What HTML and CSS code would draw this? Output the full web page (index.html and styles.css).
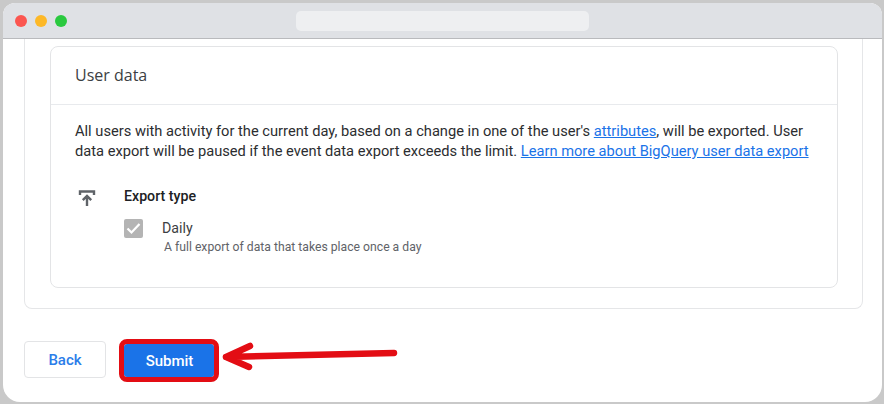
FILE: index.html
```html
<!DOCTYPE html>
<html lang="en">
<head>
<meta charset="utf-8">
<title>User data export</title>
<link rel="stylesheet" href="styles.css">
</head>
<body>
<div class="window">
  <header class="titlebar">
    <div class="lights">
      <span class="light red"></span>
      <span class="light yellow"></span>
      <span class="light green"></span>
    </div>
    <div class="urlbar"></div>
  </header>
  <main class="content">
    <section class="outer-card">
      <div class="inner-card">
        <h2 class="card-title">User data</h2>
        <div class="card-body">
          <p class="desc">All users with activity for the current day, based on a change in one of the user's <a href="#">attributes</a>, will be exported. User data export will be paused if the event data export exceeds the limit. <a href="#">Learn more about BigQuery user data export</a></p>
          <div class="export">
            <svg class="export-icon" width="24" height="24" viewBox="0 0 24 24" aria-hidden="true"><path d="M5 9V5.500h14V9M12 20V10M7.800 14.200 12 10l4.200 4.200" fill="none" stroke="#5f6368" stroke-width="2.400"/></svg>
            <div class="export-main">
              <h3 class="export-title">Export type</h3>
              <div class="option">
                <span class="check"><svg width="19" height="19" viewBox="0 0 19 19" aria-hidden="true"><path d="M3.500 9.500 7.500 13.500 15.500 5" fill="none" stroke="#fff" stroke-width="2.200"/></svg></span>
                <div class="option-text">
                  <div class="option-name">Daily</div>
                  <div class="option-desc">A full export of data that takes place once a day</div>
                </div>
              </div>
            </div>
          </div>
        </div>
      </div>
    </section>
    <footer class="actions">
      <button class="btn back">Back</button>
      <button class="btn submit">Submit</button>
      <svg class="arrow" width="182" height="40" viewBox="0 0 182 40" aria-hidden="true"><path d="M174 13 6 17M30 6 6 17 29 27" fill="none" stroke="#e30d14" stroke-width="6.500" stroke-linecap="round" stroke-linejoin="round"/></svg>
    </footer>
  </main>
</div>
</body>
</html>
```
FILE: styles.css
```css
* { box-sizing: border-box; }
html, body { margin: 0; height: 100%; }
body {
  width: 884px;
  height: 404px;
  overflow: hidden;
  padding: 3px 2px 2px 3px;
  background: #c9c9c9;
  font-family: Roboto, "Liberation Sans", sans-serif;
  color: #3c4043;
}
.window {
  height: 399px;
  background: #fff;
  border-radius: 12px 12px 17px 17px;
  overflow: hidden;
  display: flex;
  flex-direction: column;
}
.titlebar {
  height: 36px;
  flex: none;
  background: #dfe1e5;
  border-bottom: 1px solid #b9babd;
  display: flex;
  align-items: center;
  padding-left: 12px;
}
.lights { display: flex; gap: 8px; }
.light { width: 12px; height: 12px; border-radius: 50%; }
.red { background: #fb5650; }
.yellow { background: #fdb827; }
.green { background: #2ac93f; }
.urlbar {
  width: 293px;
  height: 20px;
  margin-left: 229px;
  background: #eeeff1;
  border-radius: 5px;
}
.content { flex: 1; padding: 0 19px 0 21px; display: flex; flex-direction: column; }
.outer-card {
  height: 270px;
  padding: 7px 24px 0 25px;
  border: 1px solid #e5e6e8;
  border-top: 0;
  border-radius: 0 0 8px 8px;
}
.inner-card {
  height: 242px;
  border: 1px solid #e3e4e6;
  border-radius: 8px;
}
.card-title {
  margin: 0;
  height: 58px;
  padding: 19px 24px 0;
  font-family: "Open Sans", Roboto, sans-serif;
  font-size: 16px;
  line-height: 18px;
  font-weight: 400;
  color: #3c4043;
  border-bottom: 1px solid #e8eaed;
}
.card-body { padding: 16px 24px 0; }
.desc { margin: 0; font-size: 14.67px; line-height: 20px; color: #2b2d30; }
.desc a { color: #1a73e8; text-decoration: underline; }
.export { display: flex; margin-top: 25px; }
.export-icon { flex: none; }
.export-main { margin-left: 25px; }
.export-title { margin: 0; font-size: 14.2px; line-height: 20px; font-weight: 500; color: #202124; }
.option { display: flex; margin-top: 13px; }
.check {
  width: 19px; height: 19px;
  background: #b4b4b4;
  border-radius: 2px;
  display: flex;
}
.option-text { margin: 1px 0 0 19px; }
.option-name { font-size: 14.2px; line-height: 17px; color: #3c4043; }
.option-desc { margin: 2px 0 0 2px; font-size: 12.2px; line-height: 17px; color: #5f6368; }
.actions {
  position: relative;
  display: flex;
  align-items: flex-start;
  gap: 18px;
  margin-top: 32px;
}
.btn {
  font-family: Roboto, sans-serif;
  font-size: 15px;
  font-weight: 500;
  border-radius: 4px;
  padding: 0;
}
.back { width: 82px; height: 37px; background: #fff; color: #2b7de9; border: 1px solid #e3e4e6; }
.submit {
  width: 90px; height: 33px;
  margin-top: 3px;
  padding-left: 1px;
  background: #1a73e8;
  color: #fff;
  border: 0;
  border-radius: 3px;
  outline: 5px solid #e30d14;
  outline-offset: 0;
}
.arrow { position: absolute; left: 196px; top: -1px; }
```
